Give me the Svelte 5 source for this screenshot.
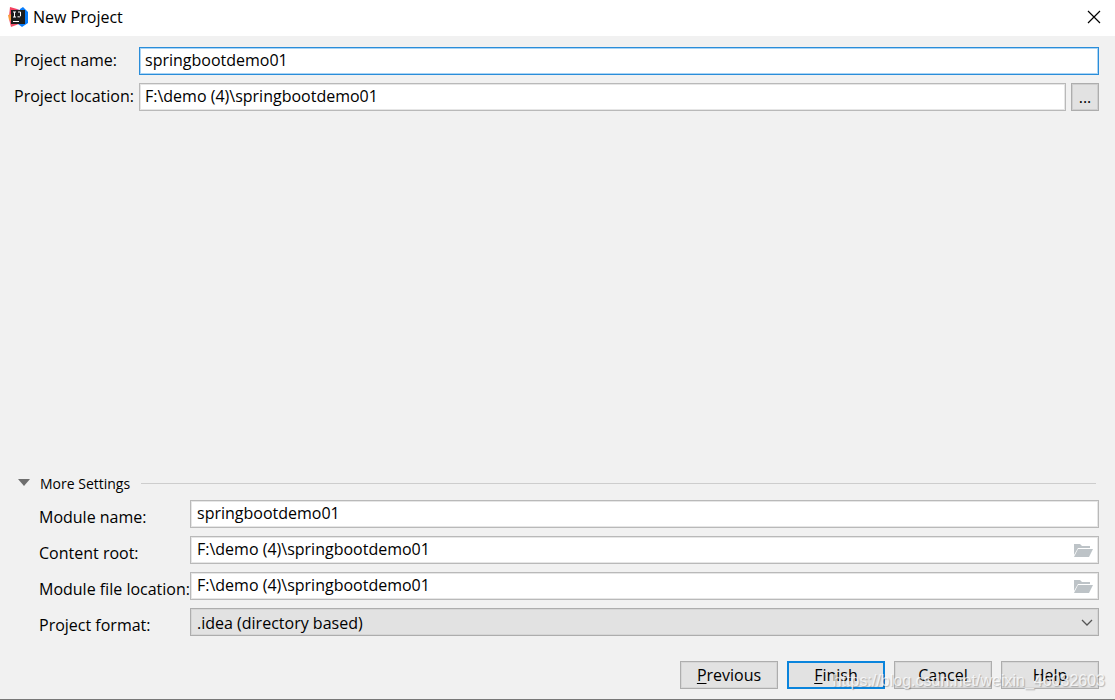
<script>
  let projectName = $state('springbootdemo01');
  let projectLocation = $state('F:\\demo (4)\\springbootdemo01');
  let moduleName = $state('springbootdemo01');
  let contentRoot = $state('F:\\demo (4)\\springbootdemo01');
  let moduleLocation = $state('F:\\demo (4)\\springbootdemo01');
  let format = $state('idea');
  let expanded = $state(true);
</script>

{#snippet folder()}
  <svg width="20" height="16" viewBox="0 0 20 16" aria-hidden="true">
    <path d="M1 1h6l2 2h8v2H5L1 12z" fill="#bdc3c7" />
    <path d="M5 6h15l-4 8H1z" fill="#bdc3c7" />
  </svg>
{/snippet}

<div class="dialog">
  <header class="titlebar">
    <svg class="logo" width="20" height="20" viewBox="0 0 20 20" aria-hidden="true">
      <path d="M2 0l7 2 3 6-6 6-5-4z" fill="#f4405f" />
      <path d="M1 12l5-2 5 7-8 3z" fill="#f0506a" />
      <path d="M0 8l4-1v7l-3-1z" fill="#f99b3d" />
      <path d="M12 2l3-2 5 5v11l-6 4-4-3z" fill="#087cfa" />
      <path d="M9 2l3 1 1 2H8z" fill="#ad5bb4" />
      <path d="M3 3h14v14H3z" fill="#1c1c1c" />
      <path d="M5 5h3M6.5 5v5M5 10h3M10 5h2.5v4l-.8.8H9.5M5 14.5h6" fill="none" stroke="#fff" stroke-width="1" />
    </svg>
    <h1>New Project</h1>
    <button class="close" aria-label="Close">
      <svg width="14" height="14" viewBox="0 0 14 14">
        <path d="M1 1l12 12M13 1L1 13" stroke="#000" stroke-width="1.2" />
      </svg>
    </button>
  </header>

  <main>
    <div class="project">
      <label for="name">Project name:</label>
      <input id="name" class="focused" type="text" bind:value={projectName} />
      <label for="location">Project location:</label>
      <div class="with-button">
        <input id="location" type="text" bind:value={projectLocation} />
        <button class="browse" aria-label="Browse project location">...</button>
      </div>
    </div>

    <section class="more">
      <div class="divider">
        <button class="toggle" aria-expanded={expanded} onclick={() => (expanded = !expanded)}>
          <svg width="12" height="8" viewBox="0 0 12 8" aria-hidden="true">
            <path d="M0 0h12L6 7z" fill="#6e6e6e" />
          </svg>
          <span>More Settings</span>
        </button>
        <hr />
      </div>

      {#if expanded}
        <div class="settings">
          <label for="module">Module name:</label>
          <input id="module" type="text" bind:value={moduleName} />
          <label for="root">Content root:</label>
          <div class="path">
            <input id="root" type="text" bind:value={contentRoot} />
            <button aria-label="Browse content root">{@render folder()}</button>
          </div>
          <label for="file">Module file location:</label>
          <div class="path">
            <input id="file" type="text" bind:value={moduleLocation} />
            <button aria-label="Browse module file location">{@render folder()}</button>
          </div>
          <label for="format">Project format:</label>
          <div class="combo">
            <select id="format" bind:value={format}>
              <option value="idea">.idea (directory based)</option>
              <option value="ipr">.ipr (file based)</option>
            </select>
            <svg width="12" height="8" viewBox="0 0 12 8" aria-hidden="true">
              <path d="M1 1l5 5 5-5" fill="none" stroke="#555" stroke-width="1.3" />
            </svg>
          </div>
        </div>
      {/if}
    </section>
  </main>

  <footer>
    <button class="action"><u>P</u>revious</button>
    <button class="action default"><u>F</u>inish</button>
    <button class="action">Cancel</button>
    <button class="action">Help</button>
    <span class="watermark">https://blog.csdn.net/weixin_46032603</span>
  </footer>
</div>

<style>
  :global(body) {
    margin: 0;
    background: #f1f1f1;
  }

  .dialog {
    position: relative;
    display: flex;
    flex-direction: column;
    box-sizing: border-box;
    min-height: 100vh;
    border-bottom: 1px solid #777;
    background: #f1f1f1;
    color: #000;
    font: 16px/22px "Open Sans", "Noto Sans", sans-serif;
  }

  input,
  select,
  button {
    box-sizing: border-box;
    margin: 0;
    color: inherit;
    font: inherit;
    outline: none;
  }

  .titlebar {
    display: flex;
    align-items: center;
    box-sizing: border-box;
    height: 36px;
    padding: 0 14px 2px 8px;
    background: #fff;
  }
  h1 {
    flex: 1;
    margin: 0 0 0 5px;
    font-size: 16px;
    font-weight: 400;
  }
  .close {
    display: flex;
    padding: 0;
    border: 0;
    background: none;
  }

  main {
    flex: 1;
    display: flex;
    flex-direction: column;
    justify-content: space-between;
    padding: 11px 16px 0 14px;
  }

  .project {
    display: grid;
    grid-template-columns: 125px 1fr;
    row-gap: 8px;
    align-items: center;
  }
  label {
    padding-bottom: 2px;
    white-space: nowrap;
  }

  input,
  select {
    width: 100%;
    min-width: 0;
    height: 28px;
    padding: 0 5px 2px;
    border: 1px solid #b9b9b9;
    border-radius: 0;
    background: #fff;
    box-shadow: inset 0 0 0 1px #e6e6e6;
  }
  input.focused {
    border-color: #2a8dd9;
    box-shadow: inset 0 0 0 1px #a9d4f5;
  }

  .with-button {
    display: flex;
    gap: 5px;
  }
  .browse {
    flex: 0 0 28px;
    height: 28px;
    padding: 0;
    border: 1px solid #adadad;
    background: #e2e2e2;
    box-shadow: inset 0 0 0 1px #cfcfcf;
  }

  .divider {
    display: flex;
    align-items: center;
    gap: 7px;
    height: 22px;
    margin-bottom: 6px;
    padding: 0 3px 0 4px;
  }
  .toggle {
    display: flex;
    align-items: center;
    gap: 10px;
    min-width: 116px;
    padding: 0;
    border: 0;
    background: none;
    font-size: 14px;
  }
  .toggle span {
    padding-top: 2px;
  }
  hr {
    flex: 1;
    margin: 0;
    border: 0;
    border-top: 1px solid #cdcdcd;
  }

  .settings {
    display: grid;
    grid-template-columns: 151px 1fr;
    row-gap: 8px;
    padding-left: 25px;
  }
  .settings label {
    padding: 6px 0 0;
  }
  .settings input,
  .settings select {
    padding-left: 6px;
  }
  .path,
  .combo {
    position: relative;
  }
  .path input {
    padding-right: 32px;
  }
  .path button {
    position: absolute;
    top: 7px;
    right: 6px;
    display: flex;
    padding: 0;
    border: 0;
    background: none;
  }
  .combo select {
    appearance: none;
    padding-top: 2px;
    padding-bottom: 0;
    border-color: #adadad;
    background: #e2e2e2;
    box-shadow: inset 0 0 0 1px #d6d6d6;
  }
  .combo svg {
    position: absolute;
    top: 11px;
    right: 6px;
    pointer-events: none;
  }

  footer {
    display: flex;
    justify-content: flex-end;
    gap: 9px;
    padding: 25px 16px 10px;
  }
  .action {
    width: 98px;
    height: 28px;
    padding: 0 0 1px;
    border: 1px solid #adadad;
    background: #e2e2e2;
    box-shadow: inset 0 0 0 1px #d6d6d6;
  }
  .action.default {
    border: 2px solid #0a84dc;
    box-shadow: none;
  }
  u {
    text-underline-offset: 2px;
  }

  .watermark {
    position: absolute;
    right: 10px;
    bottom: 7px;
    color: rgba(255, 255, 255, 0.75);
    font: 16px/22px "Liberation Sans", Arial, sans-serif;
    text-shadow: 1px 1px 1px rgba(0, 0, 0, 0.25);
    pointer-events: none;
  }
</style>
